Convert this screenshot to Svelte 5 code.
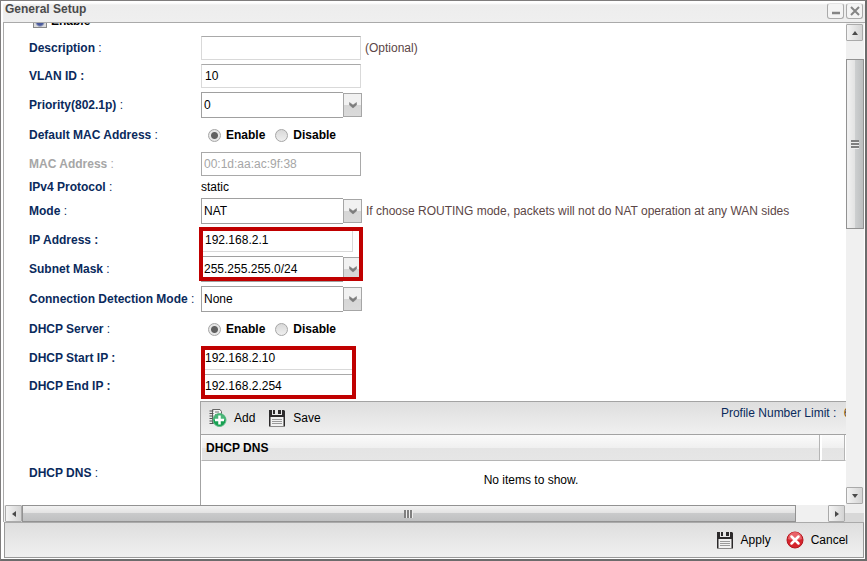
<script>
  let enabled = $state(true);
  let description = $state('');
  let vlan = $state('10');
  let priority = $state('0');
  let defaultMac = $state('enable');
  let mac = $state('00:1d:aa:ac:9f:38');
  let mode = $state('NAT');
  let ip = $state('192.168.2.1');
  let mask = $state('255.255.255.0/24');
  let detection = $state('None');
  let dhcp = $state('enable');
  let startIp = $state('192.168.2.10');
  let endIp = $state('192.168.2.254');
</script>

{#snippet arrow()}
  <span class="arrow">
    <svg width="10" height="8" viewBox="0 0 10 8" aria-hidden="true">
      <path d="M1.5 1.5 5 4 8.5 1.5V4L5 7 1.5 4Z" fill="#7c7c7c" stroke="#7c7c7c" stroke-width=".5" />
    </svg>
  </span>
{/snippet}

{#snippet floppy()}
  <svg width="18" height="18" viewBox="0 0 18 18" aria-hidden="true">
    <path d="M1 1h15l1 1v15.500H1z" fill="#2c2a2b" />
    <path d="M4 1h10v5H4z" fill="#e8e8e8" />
    <path d="M5 1h2v4H5zM10 1h3v4h-3z" fill="#2c2a2b" />
    <path d="M2.500 8h13v9h-13z" fill="#f1f1f1" />
    <path d="M4 10.500h10M4 12.500h10M4 14.500h10" stroke="#9a9a9a" />
  </svg>
{/snippet}

{#snippet triangle(turn)}
  <svg width="8" height="8" viewBox="0 0 8 8" aria-hidden="true">
    <path d="M4 2 7 6H1Z" fill="#4a4a4a" transform="rotate({turn} 4 4)" />
  </svg>
{/snippet}

<div class="window">
  <header>
    <h1>General Setup</h1>
    <button class="tool" aria-label="Minimize">
      <svg width="14" height="14" viewBox="0 0 14 14"><path d="M3 9h8" stroke="#858585" stroke-width="2.500" /></svg>
    </button>
    <button class="tool" aria-label="Close">
      <svg width="14" height="14" viewBox="0 0 14 14"><path d="M3 3l8 8M11 3l-8 8" stroke="#858585" stroke-width="2" /></svg>
    </button>
  </header>

  <div class="body">
    <div class="view">
      <form id="setup">
        <div class="row top">
          <label class="check"><input type="checkbox" bind:checked={enabled} /> Enable</label>
        </div>
        <div class="row">
          <label class="name" for="description"><b>Description</b> :</label>
          <input id="description" class="text" type="text" bind:value={description} />
          <span class="hint">(Optional)</span>
        </div>
        <div class="row">
          <label class="name" for="vlan"><b>VLAN ID :</b></label>
          <input id="vlan" class="text" type="text" bind:value={vlan} />
        </div>
        <div class="row">
          <label class="name" for="priority"><b>Priority(802.1p)</b> :</label>
          <div class="combo">
            <select id="priority" bind:value={priority}>
              {#each ['0', '1', '2', '3', '4', '5', '6', '7'] as p}<option>{p}</option>{/each}
            </select>
            {@render arrow()}
          </div>
        </div>
        <div class="row tall" role="radiogroup" aria-labelledby="mac-mode">
          <span class="name" id="mac-mode"><b>Default MAC Address</b> :</span>
          <label class="radio"><input type="radio" name="mac" value="enable" bind:group={defaultMac} />Enable</label>
          <label class="radio"><input type="radio" name="mac" value="disable" bind:group={defaultMac} />Disable</label>
        </div>
        <div class="row off">
          <label class="name" for="mac"><b>MAC Address</b> :</label>
          <input id="mac" class="text" type="text" disabled bind:value={mac} />
        </div>
        <div class="row short">
          <span class="name"><b>IPv4 Protocol</b> :</span>
          <span>static</span>
        </div>
        <div class="row">
          <label class="name" for="mode"><b>Mode</b> :</label>
          <div class="combo">
            <select id="mode" bind:value={mode}><option>NAT</option><option>ROUTING</option></select>
            {@render arrow()}
          </div>
          <span class="hint">If choose ROUTING mode, packets will not do NAT operation at any WAN sides</span>
        </div>
        <div class="group">
          <div class="row">
            <label class="name" for="ip"><b>IP Address :</b></label>
            <input id="ip" class="text ip" type="text" bind:value={ip} />
          </div>
          <div class="row">
            <label class="name" for="mask"><b>Subnet Mask</b> :</label>
            <div class="combo">
              <select id="mask" bind:value={mask}><option>255.255.255.0/24</option><option>255.255.0.0/16</option></select>
              {@render arrow()}
            </div>
          </div>
          <div class="mark address"></div>
        </div>
        <div class="row">
          <label class="name" for="detection"><b>Connection Detection Mode</b> :</label>
          <div class="combo">
            <select id="detection" bind:value={detection}><option>None</option><option>ARP</option></select>
            {@render arrow()}
          </div>
        </div>
        <div class="row tall" role="radiogroup" aria-labelledby="dhcp-mode">
          <span class="name" id="dhcp-mode"><b>DHCP Server</b> :</span>
          <label class="radio"><input type="radio" name="dhcp" value="enable" bind:group={dhcp} />Enable</label>
          <label class="radio"><input type="radio" name="dhcp" value="disable" bind:group={dhcp} />Disable</label>
        </div>
        <div class="group">
          <div class="row">
            <label class="name" for="start"><b>DHCP Start IP :</b></label>
            <input id="start" class="text ip" type="text" bind:value={startIp} />
          </div>
          <div class="row">
            <label class="name" for="end"><b>DHCP End IP :</b></label>
            <input id="end" class="text ip" type="text" bind:value={endIp} />
          </div>
          <div class="mark range"></div>
        </div>
        <div class="row list">
          <span class="name"><b>DHCP DNS</b> :</span>
          <div class="panel">
            <div class="toolbar">
              <button type="button">
                <svg width="19" height="20" viewBox="0 0 19 20" aria-hidden="true">
                  <path d="M4.500 1.500h7.500l1.500 2V15h-9z" fill="#f4f4f4" stroke="#666" />
                  <path d="M1.500 3h4M1.500 5.500h4M1.500 8h4M1.500 10.500h4M1.500 13h4M1.500 15.500h4" stroke="#555" stroke-width="1.200" />
                  <path d="M7 4h4M7 6.500h4M7 9h3" stroke="#777" />
                  <circle cx="11.500" cy="12" r="6.500" fill="#17a052" stroke="#5fbb86" />
                  <path d="M5.500 12a6 6 0 0 1 12 0Z" fill="#4bb679" />
                  <path d="M11.500 7.500v9M7 12h9" stroke="#fff" stroke-width="2.500" />
                </svg>
                Add
              </button>
              <button type="button">{@render floppy()} Save</button>
              <div class="limit">Profile Number Limit : <b>64</b></div>
            </div>
            <table>
              <thead>
                <tr><th>DHCP DNS</th><th class="narrow" aria-label="Actions"></th><th class="edge" aria-label="Menu"></th></tr>
              </thead>
              <tbody>
                <tr><td colspan="3">No items to show.</td></tr>
              </tbody>
            </table>
          </div>
        </div>
      </form>
    </div>

    <div class="vbar">
      <button class="step" aria-label="Scroll up">{@render triangle(0)}</button>
      <div class="track">
        <div class="space"></div>
        <div class="thumb"><i></i></div>
        <div class="rest"></div>
      </div>
      <button class="step" aria-label="Scroll down">{@render triangle(180)}</button>
    </div>
  </div>

  <div class="hbar">
    <button class="step" aria-label="Scroll left">{@render triangle(-90)}</button>
    <div class="track">
      <div class="thumb"><i></i></div>
    </div>
    <button class="step" aria-label="Scroll right">{@render triangle(90)}</button>
    <div class="corner"></div>
  </div>

  <footer>
    <button type="submit" form="setup">{@render floppy()} Apply</button>
    <button type="button">
      <svg width="18" height="18" viewBox="0 0 18 18" aria-hidden="true">
        <circle cx="9" cy="9" r="8" fill="#d6242c" stroke="#b3161e" />
        <path d="M2 8a7 7 0 0 1 14 0c-3 1.500-11 1.500-14 0Z" fill="#e8636a" />
        <path d="M5.500 5.500l7 7M12.500 5.500l-7 7" stroke="#fff" stroke-width="2.500" stroke-linecap="round" />
      </svg>
      Cancel
    </button>
  </footer>
</div>

<style>
  .window {
    box-sizing: border-box;
    height: 100vh;
    display: flex;
    flex-direction: column;
    border: 1px solid #7f7d7d;
    border-right: 2px solid #6c6c6c;
    border-bottom: 2px solid #6c6c6c;
    background: #fff;
    color: #000;
    font: 12px/16px 'Liberation Sans', Arial, sans-serif;
    overflow: hidden;
  }
  .window :is(button, input, select) {
    font: inherit;
    color: inherit;
    margin: 0;
    box-sizing: border-box;
  }
  header {
    flex: none;
    display: flex;
    gap: 2px;
    box-sizing: border-box;
    height: 22px;
    padding: 0 2px;
    margin-left: 2px;
    border-bottom: 1px solid #aaa;
    background: linear-gradient(#fff 2px, #ededed 4px, #efefef);
  }
  h1 {
    flex: 1;
    margin: 0;
    font-size: 12px;
    line-height: 17px;
    color: #4b4b4b;
  }
  .tool {
    width: 17px;
    height: 16px;
    margin-top: 2px;
    padding: 0;
    border: 1px solid #aaa;
    border-top-color: #e4e4e4;
    border-radius: 3px;
    background: #f4f4f4;
    display: grid;
    place-items: center;
  }
  .window .tool {
    margin-top: 2px;
  }
  .body {
    flex: 1;
    min-height: 0;
    display: flex;
    margin: 0 1px 0 2px;
    border-left: 1px solid #aaa;
  }
  .view {
    flex: 1;
    min-width: 0;
    overflow: hidden;
  }
  form {
    width: calc(100% + 37px);
    margin-top: -15px;
  }
  .row {
    display: flex;
    align-items: center;
    padding: 2px 0 2px 25px;
  }
  .row.top {
    height: 22px;
    padding-left: 29px;
  }
  .row.tall {
    height: 26px;
  }
  .row.short {
    height: 14px;
  }
  .name {
    flex: none;
    width: 172px;
    color: #0a2a5c;
    white-space: nowrap;
  }
  .off .name {
    color: #a6a6a6;
  }
  .check {
    display: flex;
    align-items: center;
    gap: 4px;
    font-weight: bold;
  }
  .check input {
    appearance: none;
    width: 14px;
    height: 14px;
    border: 1px solid #888;
    background: radial-gradient(circle at 50% 60%, #4a5a9c 3px, #dcdcdc 5px);
  }
  .text {
    width: 160px;
    height: 24px;
    padding: 0 3px;
    border: 1px solid #d9d9d9;
    border-top-color: #a9a9a9;
    background: #fff;
    outline: none;
  }
  .window .text:disabled {
    padding: 0 2px;
    color: #a6a6a6;
    border-color: #a9a9a9;
  }
  .text.ip {
    width: 152px;
  }
  .combo {
    position: relative;
    width: 161px;
    height: 26px;
  }
  .combo select {
    appearance: none;
    width: 142px;
    height: 100%;
    padding: 0 0 0 2px;
    border: 1px solid #a0a0a0;
    border-right: 0;
    border-radius: 0;
    background: #fff;
    outline: none;
  }
  .arrow {
    position: absolute;
    top: 1px;
    right: 0;
    bottom: 1px;
    width: 19px;
    box-sizing: border-box;
    border: 1px solid #a6a6a6;
    background: linear-gradient(#f1f1f1 50%, #d6d6d6 50%, #dadada);
    display: grid;
    place-items: center;
    pointer-events: none;
  }
  .hint {
    padding-left: 4px;
    color: #5c4646;
    white-space: nowrap;
  }
  .radio {
    display: flex;
    align-items: center;
    gap: 5px;
    margin-left: 7px;
    font-weight: bold;
  }
  .radio + .radio {
    margin-left: 10px;
  }
  .radio input {
    appearance: none;
    width: 13px;
    height: 13px;
    border: 1px solid #a6a6a6;
    border-radius: 50%;
    background: linear-gradient(#d9d9d9, #efefef);
  }
  .radio input:checked {
    background: radial-gradient(circle, #606060 3px, #e6e6e6 4px);
  }
  .group {
    position: relative;
  }
  .mark {
    position: absolute;
    box-sizing: border-box;
    border: 4px solid #c00000;
    pointer-events: none;
  }
  .mark.address {
    left: 195px;
    top: 1px;
    width: 164px;
    bottom: 3px;
  }
  .mark.range {
    left: 197px;
    top: 2px;
    width: 155px;
    bottom: 1px;
  }
  .row.list {
    height: 144px;
    padding: 1px 0;
    padding-left: 25px;
  }
  .panel {
    flex: 1;
    align-self: stretch;
    margin: 0 21px 0 -1px;
    border: 1px solid #a3a3a3;
  }
  .toolbar {
    display: flex;
    align-items: center;
    gap: 13px;
    height: 32px;
    padding-left: 7px;
    border-bottom: 1px solid #a3a3a3;
    background: linear-gradient(#dedede, #f0f0f0);
  }
  .toolbar button,
  footer button {
    display: flex;
    align-items: center;
    gap: 7px;
    padding: 0;
    border: 0;
    background: none;
  }
  .limit {
    align-self: flex-start;
    margin: 3px 4px 0 auto;
    color: #0a2a5c;
    white-space: nowrap;
  }
  .limit b {
    margin-left: 4px;
    font-weight: normal;
    color: #6b4a10;
  }
  table {
    width: 100%;
    border-collapse: separate;
    border-spacing: 0;
  }
  th {
    height: 25px;
    padding: 0 4px;
    text-align: left;
    border-right: 1px solid #b5b5b5;
    border-bottom: 1px solid #b5b5b5;
    border-left: 1px solid #fff;
    background: linear-gradient(#fbfbfb, #f0f0f0 50%, #e4e4e4 52%, #e6e6e6);
  }
  th.narrow {
    width: 14px;
    border-left: 2px solid #fff;
  }
  th.edge {
    width: 6px;
  }
  td {
    padding: 11px 0;
    text-align: center;
  }
  .step {
    flex: none;
    width: 17px;
    height: 17px;
    padding: 0;
    border: 1px solid #aaa;
    border-radius: 1px;
    background: linear-gradient(90deg, #f4f4f4, #d4d4d4);
    display: grid;
    place-items: center;
  }
  .vbar {
    flex: none;
    width: 18px;
    display: flex;
    flex-direction: column;
    padding: 1px 0;
    background: #f0f0f0;
  }
  .vbar .track {
    flex: 1;
    display: flex;
    flex-direction: column;
  }
  .vbar .space {
    flex: 18;
  }
  .vbar .thumb {
    flex: 168;
  }
  .vbar .rest {
    flex: 257;
  }
  .thumb {
    box-sizing: border-box;
    border: 1px solid #929292;
    display: grid;
    place-items: center;
  }
  .vbar .thumb {
    background: linear-gradient(90deg, #efefef 10%, #e2e2e2 50%, #cdcfd0 51%, #bcbebf);
  }
  .vbar i {
    width: 8px;
    height: 9px;
    background: repeating-linear-gradient(#808080 0 2px, #eee 2px 3px);
  }
  .hbar {
    flex: none;
    height: 17px;
    display: flex;
    margin: 0 1px 0 2px;
    padding-left: 1px;
    border-left: 1px solid #aaa;
    background: #f0f0f0;
  }
  .hbar .track {
    flex: 1;
    display: flex;
  }
  .hbar .thumb {
    width: 96%;
    background: linear-gradient(#f2f2f2, #e2e2e2 48%, #c9cacb 50%, #bfc0c1);
  }
  .hbar i {
    width: 9px;
    height: 8px;
    background: repeating-linear-gradient(90deg, #808080 0 2px, #eee 2px 3px);
  }
  .corner {
    width: 19px;
    background: linear-gradient(#eee 48%, #d8d8d8 50%);
  }
  footer {
    flex: none;
    box-sizing: border-box;
    height: 36px;
    display: flex;
    justify-content: flex-end;
    align-items: center;
    gap: 15px;
    padding-right: 15px;
    margin: 0 1px 1px 3px;
    border: 1px solid #999;
    border-top-color: #aaa;
    background: linear-gradient(#dedede, #f0f0f0);
  }
</style>
